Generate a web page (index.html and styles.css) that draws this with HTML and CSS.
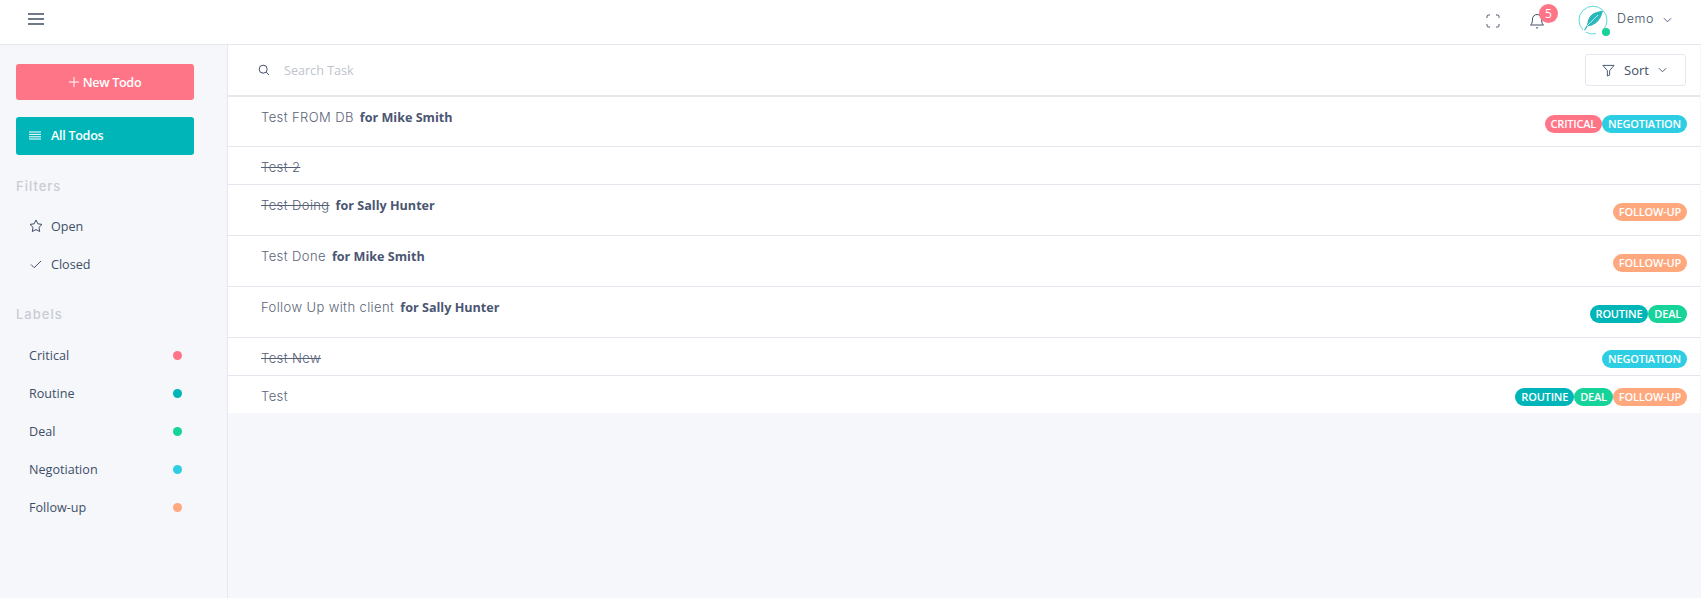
FILE: index.html
```html
<!DOCTYPE html>
<html lang="en">
<head>
  <meta charset="UTF-8" />
  <title>Todo</title>
  <link rel="stylesheet" href="styles.css">
</head>
<body>
  <header class="topbar">
    <svg class="icon menu-icon" viewBox="0 0 18 12"><path d="M1 1h16M1 6h16M1 11h16"/></svg>
    <div class="top-right">
      <svg class="icon expand-icon" viewBox="0 0 14 14"><path d="M1 4V2.500A1.500 1.500 0 0 1 2.500 1H4M10 1h1.500A1.500 1.500 0 0 1 13 2.500V4M13 10v1.500a1.500 1.500 0 0 1-1.500 1.500H10M4 13H2.500A1.500 1.500 0 0 1 1 11.500V10"/></svg>
      <div class="bell">
        <svg class="icon bell-icon" viewBox="0 0 16 16"><path d="M12.500 6a4.500 4.500 0 0 0-9 0c0 5-2 6-2 6h13s-2-1-2-6M9 14.500a1.200 1.200 0 0 1-2 0"/></svg>
        <span class="bell-count">5</span>
      </div>
      <div class="user">
        <div class="avatar">
          <svg viewBox="0 0 30 30"><path class="avatar-ring" d="M25 25A14 14 0 1 0 5 25M8 27.200A14 14 0 0 0 18 28.600"/><path class="avatar-leaf" d="M25 6c-6 0-11 2-14 7-1.500 3-1.500 5-2 7l-3 5 1 .6 3-4.500c2.500 0 5-1 7.500-2.600 4-3 6-7 7.500-12.500z"/><path class="avatar-vein" d="M9 21l11-11"/></svg>
          <span class="online"></span>
        </div>
        <span class="user-name">Demo</span>
        <svg class="icon chevron" viewBox="0 0 10 6"><path d="M1 1l4 4 4-4"/></svg>
      </div>
    </div>
  </header>

  <div class="page">
    <aside class="sidebar">
      <button class="btn btn-new">
        <svg class="icon plus-icon" viewBox="0 0 10 10"><path d="M5 0v10M0 5h10"/></svg>
        New Todo
      </button>
      <button class="btn btn-all">
        <svg class="icon all-icon" viewBox="0 0 12 9"><path d="M0 1h12M0 3.400h12M0 5.800h12M0 8h12"/></svg>
        All Todos
      </button>

      <h5 class="side-title">Filters</h5>
      <ul class="side-list">
        <li>
          <svg class="icon side-icon" viewBox="0 0 14 14"><path d="M7 1l1.850 3.800 4.150.6-3 2.950.7 4.150L7 10.550 3.300 12.500 4 8.350 1 5.400l4.150-.6z"/></svg>
          Open
        </li>
        <li>
          <svg class="icon side-icon" viewBox="0 0 14 14"><path d="M2 7.500l3.200 3.200L12 4"/></svg>
          Closed
        </li>
      </ul>

      <h5 class="side-title labels-title">Labels</h5>
      <ul class="side-list label-list">
        <li>Critical <span class="dot critical"></span></li>
        <li>Routine <span class="dot routine"></span></li>
        <li>Deal <span class="dot deal"></span></li>
        <li>Negotiation <span class="dot negotiation"></span></li>
        <li>Follow-up <span class="dot followup"></span></li>
      </ul>
    </aside>

    <main class="content">
      <div class="searchbar">
        <svg class="icon search-icon" viewBox="0 0 12 12"><circle cx="5.200" cy="5.200" r="4"/><path d="M8.200 8.200L11 11"/></svg>
        <input class="search-input" type="text" placeholder="Search Task">
        <button class="sort-btn">
          <svg class="icon filter-icon" viewBox="0 0 14 14"><path d="M1 1.500h12L8.200 7.200V12l-2.400 1V7.200z"/></svg>
          Sort
          <svg class="icon chevron" viewBox="0 0 10 6"><path d="M1 1l4 4 4-4"/></svg>
        </button>
      </div>

      <ul class="todos">
        <li class="todo tall">
          <div class="todo-title"><span class="name">Test FROM DB</span><b class="owner">for Mike Smith</b></div>
          <div class="tags"><span class="tag critical">Critical</span><span class="tag negotiation">Negotiation</span></div>
        </li>
        <li class="todo">
          <div class="todo-title"><span class="name done">Test 2</span></div>
        </li>
        <li class="todo tall">
          <div class="todo-title"><span class="name done">Test Doing</span><b class="owner">for Sally Hunter</b></div>
          <div class="tags"><span class="tag followup">Follow-up</span></div>
        </li>
        <li class="todo tall">
          <div class="todo-title"><span class="name">Test Done</span><b class="owner">for Mike Smith</b></div>
          <div class="tags"><span class="tag followup">Follow-up</span></div>
        </li>
        <li class="todo tall">
          <div class="todo-title"><span class="name">Follow Up with client</span><b class="owner">for Sally Hunter</b></div>
          <div class="tags"><span class="tag routine">Routine</span><span class="tag deal">Deal</span></div>
        </li>
        <li class="todo">
          <div class="todo-title"><span class="name done">Test New</span></div>
          <div class="tags"><span class="tag negotiation">Negotiation</span></div>
        </li>
        <li class="todo">
          <div class="todo-title"><span class="name">Test</span></div>
          <div class="tags"><span class="tag routine">Routine</span><span class="tag deal">Deal</span><span class="tag followup">Follow-up</span></div>
        </li>
      </ul>
    </main>
  </div>
</body>
</html>
```

FILE: styles.css
```css
html, body {
  height: 100%;
}

body {
  margin: 0;
  font-family: "Open Sans", sans-serif;
  font-size: 13px;
  color: #404e67;
  background-color: #f5f7fb;
  overflow: hidden;
}

ul {
  margin: 0;
  padding: 0;
  list-style: none;
}

.icon {
  display: block;
  flex: none;
  fill: none;
  stroke: #404e67;
  stroke-width: 1;
}

/* top bar */
.topbar {
  display: flex;
  align-items: center;
  justify-content: space-between;
  height: 37px;
  padding: 0 29px 7px 27px;
  background-color: #fff;
  border-bottom: 1px solid #e4e7ed;
}

.menu-icon {
  width: 18px;
  height: 12px;
  stroke-width: 1.400;
}

.top-right {
  display: flex;
  align-items: center;
}

.expand-icon {
  width: 14px;
  height: 14px;
  stroke: #404e67;
  stroke-width: 1;
  stroke-dasharray: 5 2.500;
  margin-top: 4px;
}

.bell {
  position: relative;
  margin-left: 29px;
  margin-top: 4px;
}

.bell-icon {
  width: 16px;
  height: 16px;
}

.bell-count {
  position: absolute;
  top: -9px;
  left: 10px;
  width: 19px;
  height: 19px;
  border-radius: 50%;
  background-color: #ff7588;
  color: #fff;
  font-size: 12px;
  line-height: 19px;
  text-align: center;
}

.user {
  display: flex;
  align-items: center;
  margin-left: 33px;
  margin-top: 2px;
}

.avatar {
  position: relative;
  width: 30px;
  height: 30px;
}

.avatar svg {
  display: block;
  width: 30px;
  height: 30px;
}

.avatar-ring {
  fill: none;
  stroke: #5fd8d8;
  stroke-width: 1;
}

.avatar-leaf {
  fill: #2bb8bb;
}

.avatar-vein {
  fill: none;
  stroke: #fff;
  stroke-width: 0.7;
}

.online {
  position: absolute;
  right: -2px;
  bottom: -1px;
  width: 8px;
  height: 8px;
  border-radius: 50%;
  background-color: #16d39a;
}

.user-name {
  margin-left: 9px;
  margin-top: -3px;
  font-family: Inter, sans-serif;
  font-weight: 300;
  font-size: 12.500px;
  letter-spacing: 0.6px;
}

.chevron {
  width: 9px;
  height: 6px;
  margin-left: 9px;
}

/* page */
.page {
  display: grid;
  grid-template-columns: 228px 1fr;
  height: 553px;
}

.sidebar {
  box-sizing: border-box;
  padding: 19px 33px 0 16px;
  border-right: 1px solid #e4e7ed;
}

.btn {
  display: flex;
  align-items: center;
  width: 178px;
  border: 0;
  border-radius: 3px;
  color: #fff;
  font-family: "Open Sans", sans-serif;
  font-size: 12.600px;
  font-weight: 600;
  letter-spacing: -0.3px;
}

.btn .icon {
  stroke: #fff;
}

.btn-new {
  height: 36px;
  justify-content: center;
  background-color: #ff7588;
}

.plus-icon {
  width: 10px;
  height: 10px;
  margin-right: 4px;
}

.btn-all {
  height: 38px;
  margin-top: 17px;
  padding: 0 13px 2px;
  background-color: #00b5b8;
}

.all-icon {
  width: 12px;
  height: 9px;
  margin-right: 10px;
}

.side-title {
  margin: 21px 0 0;
  font-family: Inter, sans-serif;
  font-size: 13px;
  font-weight: 500;
  line-height: 20px;
  color: #c9ccd3;
  letter-spacing: 1px;
}

.labels-title {
  margin-top: 21px;
}

.side-list {
  margin-top: 11px;
  padding-left: 13px;
  font-size: 12.600px;
  color: #404e67;
}

.side-list li {
  display: flex;
  align-items: center;
  height: 38px;
}

.side-icon {
  width: 14px;
  height: 14px;
  margin-right: 8px;
}

.label-list {
  margin-top: 12px;
  padding-right: 12px;
}

.label-list li {
  justify-content: space-between;
}

.dot {
  width: 9px;
  height: 9px;
  margin-top: 1px;
  border-radius: 50%;
}

.critical { background-color: #ff7588; }
.routine { background-color: #00b5b8; }
.deal { background-color: #16d39a; }
.negotiation { background-color: #2dcee3; }
.followup { background-color: #ffa87d; }

/* main list */
.content {
  display: flex;
  flex-direction: column;
  margin-right: 1px;
}

.searchbar {
  display: flex;
  align-items: center;
  height: 50px;
  padding: 0 14px 0 30px;
  background-color: #fff;
  border-bottom: 2px solid #e8e8e8;
}

.search-icon {
  width: 12px;
  height: 12px;
  margin-right: 14px;
}

.search-input {
  flex: 1;
  border: 0;
  outline: 0;
  padding: 0;
  font-family: "Open Sans", sans-serif;
  font-size: 12.600px;
  color: #404e67;
  background: transparent;
}

.search-input::placeholder {
  color: #c0c4cd;
}

.sort-btn {
  display: flex;
  align-items: center;
  justify-content: center;
  width: 101px;
  height: 32px;
  padding-right: 8px;
  background-color: #fff;
  border: 1px solid #e4e7ed;
  border-radius: 3px;
  font-family: "Open Sans", sans-serif;
  font-size: 13px;
  color: #404e67;
}

.filter-icon {
  width: 13px;
  height: 13px;
  margin-right: 9px;
}

.todo {
  display: flex;
  align-items: center;
  justify-content: space-between;
  height: 37px;
  padding: 0 13px 0 33px;
  background-color: #fff;
  border-bottom: 1px solid #e4e7ed;
}

.todo:last-child {
  border-bottom: 0;
}

.todo.tall {
  height: 50px;
}

.todo.tall:first-child {
  height: 49px;
}

.todo-title {
  align-self: flex-start;
  margin-top: 10px;
  line-height: 20px;
}

.name {
  font-family: Inter, sans-serif;
  font-size: 13px;
  font-weight: 300;
  letter-spacing: 0.4px;
  color: #5a6478;
}

.name.done {
  text-decoration: line-through;
  color: #566076;
}

.owner {
  margin-left: 6px;
  font-weight: 700;
  font-size: 12.600px;
  color: #4a5672;
}

.tags {
  display: flex;
  margin-top: 4px;
}

.tag {
  height: 18px;
  padding: 0 6px;
  border-radius: 9px;
  color: #fff;
  font-size: 11px;
  font-weight: 600;
  line-height: 18px;
  letter-spacing: -0.2px;
  text-transform: uppercase;
}
```
